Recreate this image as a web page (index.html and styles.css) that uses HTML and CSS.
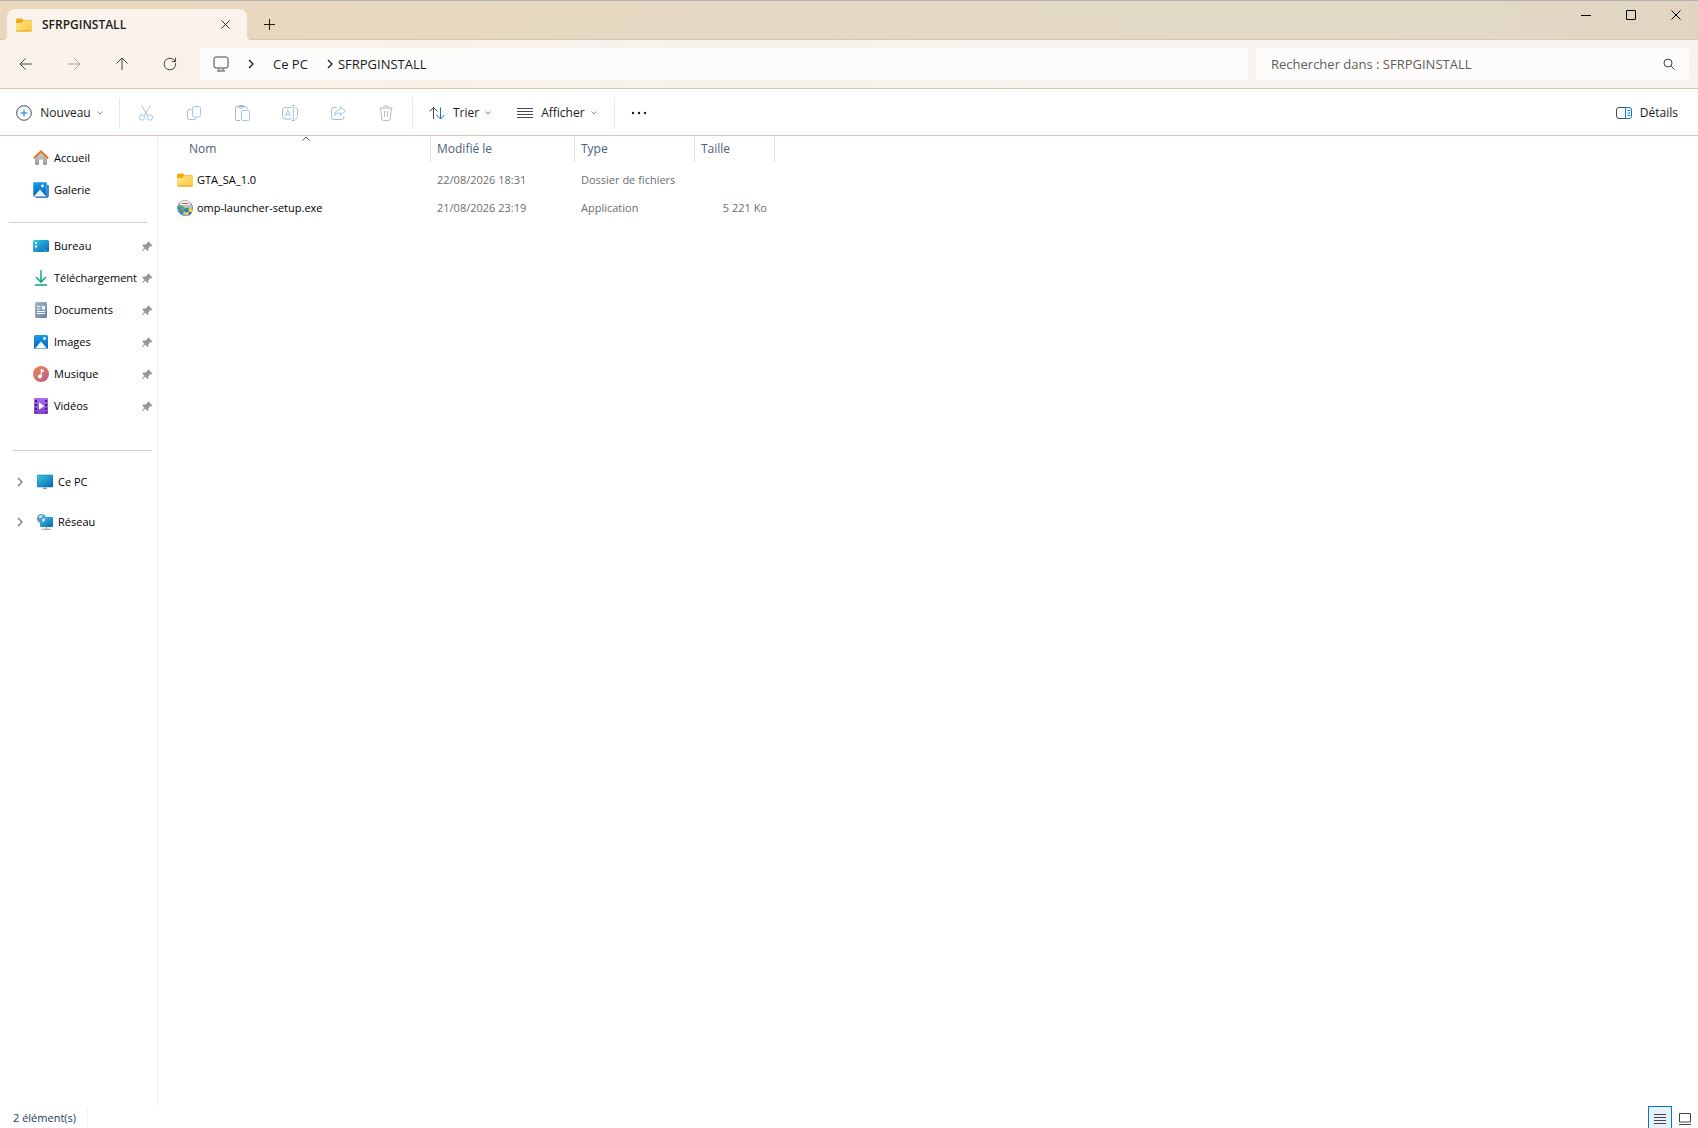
FILE: index.html
```html
<!DOCTYPE html>
<html lang="fr">
<head>
  <meta charset="UTF-8">
  <meta name="viewport" content="width=device-width, initial-scale=1.0">
  <title>SFRPGINSTALL</title>
  <link rel="stylesheet" href="styles.css">
</head>
<body>

  <!-- Icônes réutilisées -->
  <svg class="defs" aria-hidden="true">
    <defs>
      <linearGradient id="g-folder" x1="0" y1="0" x2="1" y2="1">
        <stop offset="0" stop-color="#ffe48f"/><stop offset="1" stop-color="#fbc93d"/>
      </linearGradient>
      <linearGradient id="g-screen" x1="0" y1="0" x2="1" y2="1">
        <stop offset="0" stop-color="#34cde3"/><stop offset="1" stop-color="#0b63b5"/>
      </linearGradient>
      <linearGradient id="g-photo" x1="0" y1="0" x2="0" y2="1">
        <stop offset="0" stop-color="#189bea"/><stop offset="1" stop-color="#0563bd"/>
      </linearGradient>
      <linearGradient id="g-down" x1="0" y1="0" x2="0" y2="1">
        <stop offset="0" stop-color="#35c48b"/><stop offset="1" stop-color="#0e9f8c"/>
      </linearGradient>
      <linearGradient id="g-doc" x1="0" y1="0" x2="1" y2="1">
        <stop offset="0" stop-color="#a5b8cb"/><stop offset="1" stop-color="#6580a1"/>
      </linearGradient>
      <linearGradient id="g-music" x1="0" y1="0" x2="1" y2="1">
        <stop offset="0" stop-color="#f0884c"/><stop offset="1" stop-color="#b95a92"/>
      </linearGradient>
      <linearGradient id="g-video" x1="0" y1="0" x2="0" y2="1">
        <stop offset="0" stop-color="#ac6bee"/><stop offset="1" stop-color="#8040d0"/>
      </linearGradient>
      <linearGradient id="g-house" x1="0" y1="0" x2="0" y2="1">
        <stop offset="0" stop-color="#d5d5d5"/><stop offset="1" stop-color="#9b9b9b"/>
      </linearGradient>
      <symbol id="folder" viewBox="0 0 16 16">
        <path d="M0 3q0-1.500 1.500-1.500h4.500l1.500 1.500h7q1.500 0 1.500 1.500v5h-16z" fill="#f3ad14"/>
        <path d="M0 6h5.500l2-2.500h7q1.500 0 1.500 1.500v8q0 1.500-1.500 1.500h-13q-1.500 0-1.500-1.500z" fill="url(#g-folder)"/>
        <path d="M.5 14h15" stroke="#e0a11d"/>
      </symbol>
      <symbol id="chevron-right" viewBox="0 0 8 10">
        <path d="M2 1l4 4-4 4" fill="none" stroke="currentColor" stroke-width="1.300"/>
      </symbol>
      <symbol id="chevron-down" viewBox="0 0 6 4">
        <path d="M.5.500L3 3 5.500.500" fill="none" stroke="currentColor"/>
      </symbol>
      <symbol id="close" viewBox="0 0 10 10">
        <path d="M.5.500l9 9M9.500.500l-9 9" stroke="currentColor"/>
      </symbol>
      <symbol id="pin" viewBox="0 0 12 12">
        <path d="M7 1l4.500 4.500-1 .7-.8-.2L7.500 8.200l-.1 2.300-.8.500L4.300 8.700 1.200 11.300l-.5-.5L3.400 7.700 1.200 5.400l.7-.8 2.200.1L6.500 2.700z" fill="#8f9aa3"/>
      </symbol>
    </defs>
  </svg>

  <div class="window">
    <header class="titlebar">
      <div class="tab">
        <svg class="icon"><use href="#folder"/></svg>
        <span class="tab-title">SFRPGINSTALL</span>
        <button class="tab-close" aria-label="Fermer l'onglet"><svg class="icon-close"><use href="#close"/></svg></button>
      </div>
      <button class="tab-add" aria-label="Nouvel onglet">
        <svg class="icon-plus" viewBox="0 0 11 11"><path d="M5.500 0v11M0 5.500h11" stroke="currentColor"/></svg>
      </button>
      <div class="window-controls">
        <button aria-label="Réduire"><svg class="icon-window" viewBox="0 0 10 10"><path d="M0 5.500h10" stroke="currentColor"/></svg></button>
        <button aria-label="Agrandir"><svg class="icon-window" viewBox="0 0 10 10"><rect x=".5" y=".5" width="9" height="9" rx=".5" fill="none" stroke="currentColor"/></svg></button>
        <button aria-label="Fermer"><svg class="icon-window"><use href="#close"/></svg></button>
      </div>
    </header>

    <!-- Navigation et barre d'adresse -->
    <div class="navbar">
      <div class="nav-buttons">
        <button aria-label="Précédent"><svg class="icon" viewBox="0 0 16 16"><path d="M14 8H2.500M7.500 2.500L2 8l5.500 5.500"/></svg></button>
        <button aria-label="Suivant" disabled><svg class="icon" viewBox="0 0 16 16"><path d="M2 8h11.500M8.500 2.500L14 8l-5.500 5.500"/></svg></button>
        <button aria-label="Dossier parent"><svg class="icon" viewBox="0 0 16 16"><path d="M8 14V2.500M2.500 7.500L8 2l5.500 5.500"/></svg></button>
        <button aria-label="Actualiser"><svg class="icon" viewBox="0 0 16 16"><path d="M13.600 7A5.800 5.800 0 1 1 11.500 3.500L13.500 5.200M13.500 1.800v3.700H9.800"/></svg></button>
      </div>
      <nav class="address" aria-label="Adresse">
        <svg class="icon" viewBox="0 0 16 16"><rect x="1" y="1" width="14" height="11" rx="2"/><path d="M6 12.500v2M10 12.500v2M4 15h8"/></svg>
        <svg class="icon-chevron"><use href="#chevron-right"/></svg>
        <a class="crumb" href="#ce-pc">Ce PC</a>
        <svg class="icon-chevron"><use href="#chevron-right"/></svg>
        <a class="crumb-current" href="#sfrpginstall">SFRPGINSTALL</a>
      </nav>
      <div class="search">
        <input type="search" aria-label="Rechercher" placeholder="Rechercher dans : SFRPGINSTALL">
        <svg class="icon-search" viewBox="0 0 12 12"><circle cx="5" cy="5" r="4"/><path d="M8 8l3.500 3.500"/></svg>
      </div>
    </div>

    <!-- Barre de commandes -->
    <div class="toolbar">
      <button class="command command-new">
        <svg class="icon" viewBox="0 0 16 16"><circle cx="8" cy="8" r="7.300"/><path class="blue" d="M8 4.500v7M4.500 8h7"/></svg>
        Nouveau
        <svg class="icon-down"><use href="#chevron-down"/></svg>
      </button>
      <div class="actions">
        <button aria-label="Couper" disabled><svg class="icon" viewBox="0 0 16 16"><path d="M3.500.500l6.300 10M12.500.500l-6.300 10"/><g class="blue"><circle cx="4" cy="12.500" r="2.700"/><circle cx="12" cy="12.500" r="2.700"/></g></svg></button>
        <button aria-label="Copier" disabled><svg class="icon" viewBox="0 0 16 16"><path d="M5.500 4.500H3.300Q1.500 4.500 1.500 6.300v6.400q0 1.800 1.800 1.800h5q1.700 0 1.700-2"/><rect class="blue" x="6.500" y="1.500" width="8" height="10.500" rx="1.800"/></svg></button>
        <button aria-label="Coller" disabled><svg class="icon" viewBox="0 0 16 16"><path d="M6 15.500H3Q1.500 15.500 1.500 14V3Q1.500 1.500 3 1.500h8.500Q13 1.500 13 3v1.500"/><rect x="4.500" y=".5" width="5.500" height="2.500" rx="1"/><rect class="blue" x="7.500" y="5.500" width="8" height="10" rx="1.500"/></svg></button>
        <button aria-label="Renommer" disabled><svg class="icon" viewBox="0 0 16 16"><path d="M9.500 2.500H3Q.5 2.500.5 5v6.500Q.5 14 3 14h6.500M13 2.500q2.500 0 2.500 2.500v6.500Q15.500 14 13 14"/><path class="blue" d="M11.300 1v14M9.500.500h3.500M9.500 15.500h3.500M3 11.500L5.700 4.800l2.800 6.700M4 9.500h3.500"/></svg></button>
        <button aria-label="Partager" disabled><svg class="icon" viewBox="0 0 16 16"><path d="M6.500 2.500H4Q1.500 2.500 1.500 5v7q0 2.500 2.500 2.500h7.500Q14 14.500 14 12v-1"/><path class="blue" d="M10.500 1.500L15.300 6l-4.800 4.300V7.800Q6.500 7.500 4.500 10.500 5 5 10.500 4.200z"/></svg></button>
        <button aria-label="Supprimer" disabled><svg class="icon" viewBox="0 0 16 16"><path d="M1.500 3h13M5.500 3Q5.500.700 8 .700T10.500 3M2.500 3l1.300 11q.2 1.500 1.700 1.500h5q1.500 0 1.700-1.500l1.300-11M6.500 6v6M9.500 6v6"/></svg></button>
      </div>
      <div class="views">
        <button class="command">
          <svg class="icon" viewBox="0 0 16 16"><path d="M4.500 14V2.500M.5 6.500l4-4 4 4"/><path class="blue" d="M11.500 2.500V14M7.500 10l4 4 4-4"/></svg>
          Trier
          <svg class="icon-down"><use href="#chevron-down"/></svg>
        </button>
        <button class="command">
          <svg class="icon" viewBox="0 0 16 16"><path d="M0 3.500h16M0 6.500h16M0 9.500h16M0 12.500h16"/></svg>
          Afficher
          <svg class="icon-down"><use href="#chevron-down"/></svg>
        </button>
      </div>
      <button class="more" aria-label="Plus d'options">
        <svg class="icon" viewBox="0 0 16 16"><circle cx="2" cy="8" r="1.200"/><circle cx="8" cy="8" r="1.200"/><circle cx="14" cy="8" r="1.200"/></svg>
      </button>
      <button class="command command-details">
        <svg class="icon" viewBox="0 0 16 16"><path d="M9.500 2.500H3Q.5 2.500.5 5v6q0 2.500 2.500 2.500h6.500"/><path class="blue" d="M9.500 2.500H13q2.500 0 2.500 2.500v6q0 2.500-2.500 2.500H9.500zM11.500 5.500h2.500M11.500 8h2.500M11.500 10.500h2.500"/></svg>
        Détails
      </button>
    </div>

    <div class="content">
      <aside class="sidebar">
        <ul class="group">
          <li><a href="#accueil">
            <svg class="icon" viewBox="0 0 16 16"><path d="M2 7l6-6 6 6v7q0 1-1 1H10V9.500H6V15H3q-1 0-1-1z" fill="url(#g-house)"/><path d="M.8 8.300L8 1.500l7.200 6.800" fill="none" stroke="#e8752a" stroke-width="2"/></svg>
            <span>Accueil</span></a></li>
          <li><a href="#galerie">
            <svg class="icon" viewBox="0 0 16 16"><path d="M14 2.500q1.700 0 1.700 1.700V14q0 1.800-1.800 1.800H3.500q-1.300 0-1.500-1.300z" fill="#0757a5"/><rect width="14" height="14.500" rx="1" fill="url(#g-photo)" stroke="#fff" stroke-width=".5"/><circle cx="9.500" cy="4" r="1.400" fill="#fff"/><path d="M1.200 14l5.800-6.500L12.800 14z" fill="#e8f5ff"/></svg>
            <span>Galerie</span></a></li>
        </ul>

        <ul class="group group-pinned">
          <li><a href="#bureau">
            <svg class="icon" viewBox="0 0 16 16"><rect y="2" width="16" height="12" rx="1.500" fill="url(#g-screen)"/><path d="M2 4h2v2H2zM2 7.500h2v2H2z" fill="#e8fbff"/><path d="M11 13h1M13 13h1" stroke="#bde4ff"/></svg>
            <span>Bureau</span><svg class="icon-pin"><use href="#pin"/></svg></a></li>
          <li><a href="#telechargement">
            <svg class="icon" viewBox="0 0 16 16"><path d="M8 0v11.500M3 7l5 5 5-5M2 15h12" fill="none" stroke="url(#g-down)" stroke-width="1.700"/></svg>
            <span>Téléchargement</span><svg class="icon-pin"><use href="#pin"/></svg></a></li>
          <li><a href="#documents">
            <svg class="icon" viewBox="0 0 16 16"><rect x="2" width="12" height="16" rx="1.500" fill="url(#g-doc)"/><path d="M4 4.500h3.500M4 7h3.500M4 9.500h8M4 11.500h8" stroke="#fff"/><path d="M9 4h3v3.500H9z" fill="#fff"/></svg>
            <span>Documents</span><svg class="icon-pin"><use href="#pin"/></svg></a></li>
          <li><a href="#images">
            <svg class="icon" viewBox="0 0 16 16"><rect x="1" y="1" width="14" height="14" rx="1.500" fill="url(#g-photo)"/><circle cx="11.500" cy="4.500" r="1.400" fill="#fff"/><path d="M2 14.500L8 7.500l6 7z" fill="#f1faff"/></svg>
            <span>Images</span><svg class="icon-pin"><use href="#pin"/></svg></a></li>
          <li><a href="#musique">
            <svg class="icon" viewBox="0 0 16 16"><circle cx="8" cy="8" r="8" fill="url(#g-music)"/><path d="M8.300 3v7" stroke="#fff" stroke-width="1.200"/><path d="M8 3l3 1.300v2L8 5z" fill="#fff"/><circle cx="6.900" cy="10.500" r="2" fill="#fff"/></svg>
            <span>Musique</span><svg class="icon-pin"><use href="#pin"/></svg></a></li>
          <li><a href="#videos">
            <svg class="icon" viewBox="0 0 16 16"><rect x="1" width="14" height="16" rx="1" fill="url(#g-video)"/><path d="M3 2v13M13 2v13" stroke="#431f78" stroke-width="2" stroke-dasharray="2 2"/><path d="M6 4.500v7l5.500-3.500z" fill="#fff"/></svg>
            <span>Vidéos</span><svg class="icon-pin"><use href="#pin"/></svg></a></li>
        </ul>

        <ul class="group group-tree">
          <li><a href="#ce-pc">
            <svg class="icon-expand"><use href="#chevron-right"/></svg>
            <svg class="icon" viewBox="0 0 16 16"><path d="M8 12v3M6 14.500h4" stroke="#7f9aab"/><rect y="1" width="16" height="12" rx="1" fill="url(#g-screen)" stroke="#08629a" stroke-width=".5"/></svg>
            <span>Ce PC</span></a></li>
          <li><a href="#reseau">
            <svg class="icon-expand"><use href="#chevron-right"/></svg>
            <svg class="icon" viewBox="0 0 16 16"><path d="M9.500 13v2.500M5 15.300h9" stroke="#8a9ba8"/><rect x="3" y="3" width="13" height="10" rx="1" fill="url(#g-screen)"/><circle cx="4.500" cy="4.500" r="4.500" fill="#4c9fc9"/><path d="M1.500 2.500Q4 0 6 1.500L4.500 4H2zM5 5l3-1q1 3-2.500 4.300z" fill="#c4e4ee"/></svg>
            <span>Réseau</span></a></li>
        </ul>
      </aside>

      <main class="files">
        <table>
          <colgroup>
            <col class="col-name"><col class="col-date"><col class="col-type"><col class="col-size">
          </colgroup>
          <thead>
            <tr>
              <th class="sorted">Nom<svg class="icon-sort" viewBox="0 0 8 5"><path d="M.5 4.500L4 1l3.500 3.500" fill="none" stroke="#555"/></svg></th>
              <th>Modifié le</th>
              <th>Type</th>
              <th>Taille</th>
            </tr>
          </thead>
          <tbody>
            <tr>
              <td><a class="file" href="#gta"><svg class="icon"><use href="#folder"/></svg>GTA_SA_1.0</a></td>
              <td>22/08/2026 18:31</td>
              <td>Dossier de fichiers</td>
              <td></td>
            </tr>
            <tr>
              <td><a class="file" href="#omp">
                <svg class="icon" viewBox="0 0 16 16"><circle cx="8" cy="8" r="7.500" fill="#b7c7c9" stroke="#879295"/><path d="M1 6q3-1 5 1l1 3-1 5Q1 13 1 6z" fill="#388ac0"/><path d="M2 5l4 1 3 3-2 3-3-2z" fill="#69a85a"/><path d="M3 2.500Q8-1.500 13 2.500L12 5H4z" fill="#eee"/><path d="M5 3.500h6" stroke="#c55"/><path d="M7.500 9l4-1.500 4 1.500q0 5-4 7-4-2-4-7z" fill="#2478c8"/><path d="M11.500 7.500l4 1.500v3h-4zM7.800 12h3.700v4q-3-1.500-3.700-4z" fill="#f9cf31"/></svg>omp-launcher-setup.exe</a></td>
              <td>21/08/2026 23:19</td>
              <td>Application</td>
              <td class="size">5 221 Ko</td>
            </tr>
          </tbody>
        </table>
      </main>
    </div>

    <footer class="statusbar">
      <span class="count">2 élément(s)</span>
      <div class="view-modes">
        <button class="active" aria-label="Détails"><svg class="icon-mode" viewBox="0 0 12 12"><path d="M0 1.500h12M0 4.500h12M0 7.500h12M0 10.500h12"/></svg></button>
        <button aria-label="Grandes icônes"><svg class="icon-mode" viewBox="0 0 12 12"><path d="M.5.500h11v8.500H.5zM0 11.500h12"/></svg></button>
      </div>
    </footer>
  </div>

</body>
</html>
```
FILE: styles.css
```css
/* General */
* {
  box-sizing: border-box;
}

body {
  margin: 0;
  font-family: 'Segoe UI', 'Open Sans', 'Noto Sans', sans-serif;
  font-size: 12px;
  line-height: 16px;
  color: #1b1b1b;
  background-color: #fff;
}

a {
  color: inherit;
  text-decoration: none;
}

button {
  display: flex;
  align-items: center;
  justify-content: center;
  padding: 0;
  border: none;
  background: none;
  font: inherit;
  color: inherit;
}

svg {
  display: block;
  flex: none;
}

.defs {
  position: absolute;
  width: 0;
  height: 0;
}

.icon {
  width: 16px;
  height: 16px;
}

.window {
  display: flex;
  flex-direction: column;
  min-height: 100vh;
}

/* Barre de titre */
.titlebar {
  display: flex;
  height: 40px;
  padding-left: 7px;
  border-top: 1px solid #b7b3b3;
  border-bottom: 1px solid #d8c8ab;
  background: linear-gradient(90deg, #ead7bc, #e4dac5 50%, #e2d9c7 85%, #e1d5c0);
}

.tab {
  position: relative;
  display: flex;
  align-items: center;
  width: 240px;
  height: 31px;
  margin-top: 8px;
  padding: 0 15px 0 9px;
  border-radius: 8px 8px 0 0;
  background-color: #fbf3eb;
}

/* Raccords arrondis au bas de l'onglet */
.tab::before,
.tab::after {
  content: '';
  position: absolute;
  bottom: 0;
  width: 4px;
  height: 4px;
}

.tab::before {
  left: -4px;
  background: radial-gradient(circle at 0 0, transparent 4px, #fbf3eb 4px);
}

.tab::after {
  right: -4px;
  background: radial-gradient(circle at 100% 0, transparent 4px, #fbf3eb 4px);
}

.tab-title {
  flex: 1;
  margin-left: 10px;
  font-weight: 600;
}

.tab-close {
  width: 14px;
  height: 16px;
}

.icon-close {
  width: 9px;
  height: 9px;
}

.tab-add {
  width: 45px;
}

.icon-plus {
  width: 11px;
  height: 11px;
  margin-top: 8px;
}

.window-controls {
  display: flex;
  height: 28px;
  margin-left: auto;
  color: #000;
}

.window-controls button {
  width: 45px;
}

.icon-window {
  width: 10px;
  height: 10px;
}

/* Navigation */
.navbar {
  display: flex;
  align-items: center;
  gap: 8px;
  height: 49px;
  padding-right: 9px;
  border-bottom: 1px solid #d5c6ae;
  background: linear-gradient(90deg, #fbf3eb, #f9f1e8 25%, #f5f2ec 40%, #f6f3ee);
}

.nav-buttons {
  display: flex;
  flex: none;
  width: 192px;
  padding-left: 2px;
}

.nav-buttons button {
  flex: none;
  width: 48px;
  height: 32px;
}

.navbar svg {
  fill: none;
  stroke: #444;
}

.nav-buttons button:disabled {
  opacity: 0.45;
}

.address,
.search {
  display: flex;
  align-items: center;
  height: 32px;
  border-radius: 4px;
  background-color: #fdfcfa;
  font-size: 13px;
}

.address {
  flex: 1;
  padding-left: 13px;
}

.icon-chevron {
  width: 8px;
  height: 10px;
}

.address .icon + .icon-chevron {
  margin-left: 18px;
}

.crumb {
  margin: 0 18px;
}

.crumb-current {
  margin-left: 4px;
}

.search {
  width: 26%;
  max-width: 433px;
  padding: 0 14px 0 15px;
}

.search input {
  flex: 1;
  min-width: 0;
  padding: 0;
  border: none;
  outline: none;
  background: none;
  font: inherit;
}

.search input::placeholder {
  color: #5f5d5b;
  opacity: 1;
}

.icon-search {
  width: 12px;
  height: 12px;
}

/* Barre de commandes */
.toolbar {
  display: flex;
  align-items: center;
  height: 47px;
  padding-top: 2px;
  border-bottom: 1px solid #d6c7b6;
}

.toolbar .icon {
  fill: none;
  stroke: #4a4a4a;
}

.toolbar .icon .blue {
  stroke: #0078d4;
}

.toolbar button:disabled {
  opacity: 0.38;
}

.command {
  height: 32px;
}

.command .icon {
  margin-right: 8px;
}

.icon-down {
  width: 6px;
  height: 4px;
  margin-left: 6px;
  color: #888;
}

.command-new {
  width: 119px;
}

.actions,
.views {
  display: flex;
  align-items: center;
  height: 31px;
  border-left: 1px solid #e9e9e9;
}

.actions {
  width: 293px;
  padding-left: 2px;
}

.actions button {
  width: 48px;
  height: 32px;
}

.views {
  gap: 26px;
  width: 203px;
  padding-left: 16px;
  border-right: 1px solid #e9e9e9;
}

.more {
  width: 48px;
  height: 32px;
}

.toolbar .more .icon {
  fill: #1b1b1b;
  stroke: none;
}

.command-details {
  margin-left: auto;
  padding-right: 20px;
}

/* Contenu principal */
.content {
  display: flex;
  flex: 1;
}

.sidebar {
  width: 158px;
  border-right: 1px solid #f0f0f0;
  font-size: 11px;
  color: #000;
}

.group {
  margin: 0;
  padding: 6px 0 16px;
  list-style: none;
}

.group a {
  display: flex;
  align-items: center;
  height: 32px;
  padding: 0 4px 0 33px;
}

.group span {
  flex: 1;
  margin-left: 5px;
  white-space: nowrap;
}

.icon-pin {
  width: 12px;
  height: 12px;
}

.group-pinned {
  padding: 7px 0 28px;
}

.group-pinned::before,
.group-tree::before {
  content: '';
  display: block;
  height: 1px;
  margin: -7px 10px 7px 9px;
  background-color: #cfcfcf;
}

.group-tree::before {
  margin: 0 6px 15px 13px;
}

.group-tree {
  padding: 0;
}

.group-tree li {
  margin-bottom: 8px;
}

.group-tree a {
  padding-left: 16px;
}

.icon-expand {
  width: 8px;
  height: 10px;
  margin-right: 13px;
  color: #777;
}

/* Liste des fichiers */
.files {
  flex: 1;
}

table {
  width: 617px;
  table-layout: fixed;
  border-collapse: separate;
  border-spacing: 0;
}

.col-name {
  width: 273px;
}

.col-date {
  width: 144px;
}

.col-type {
  width: 120px;
}

.col-size {
  width: 80px;
}

th {
  height: 26px;
  padding: 0 6px;
  border-right: 1px solid #e2e2e2;
  font-weight: normal;
  text-align: left;
  color: #4c607a;
}

th.sorted {
  position: relative;
  padding-left: 31px;
}

.icon-sort {
  position: absolute;
  top: 0;
  left: 144px;
  width: 8px;
  height: 5px;
}

td {
  height: 28px;
  padding: 0 8px 0 6px;
  font-size: 11px;
  white-space: nowrap;
  color: #6d6d6d;
}

tbody::before {
  content: '';
  display: block;
  height: 4px;
}

.file {
  display: flex;
  align-items: center;
  gap: 4px;
  padding-left: 13px;
  color: #000;
}

.size {
  text-align: right;
}

/* Barre d'état */
.statusbar {
  display: flex;
  align-items: center;
  justify-content: space-between;
  height: 22px;
  padding-left: 13px;
  font-size: 11px;
  color: #1e395b;
}

.count {
  padding: 2px 11px 0 0;
  border-right: 1px solid #f3f3f3;
}

.view-modes {
  display: flex;
  gap: 1px;
  padding-right: 1px;
}

.view-modes button {
  width: 24px;
  height: 22px;
  padding-top: 3px;
}

.view-modes .active {
  border: 1px solid #0078d4;
  border-bottom: none;
  background-color: #e5f1fb;
}

.icon-mode {
  width: 12px;
  height: 12px;
  fill: none;
  stroke: #444;
}
```
